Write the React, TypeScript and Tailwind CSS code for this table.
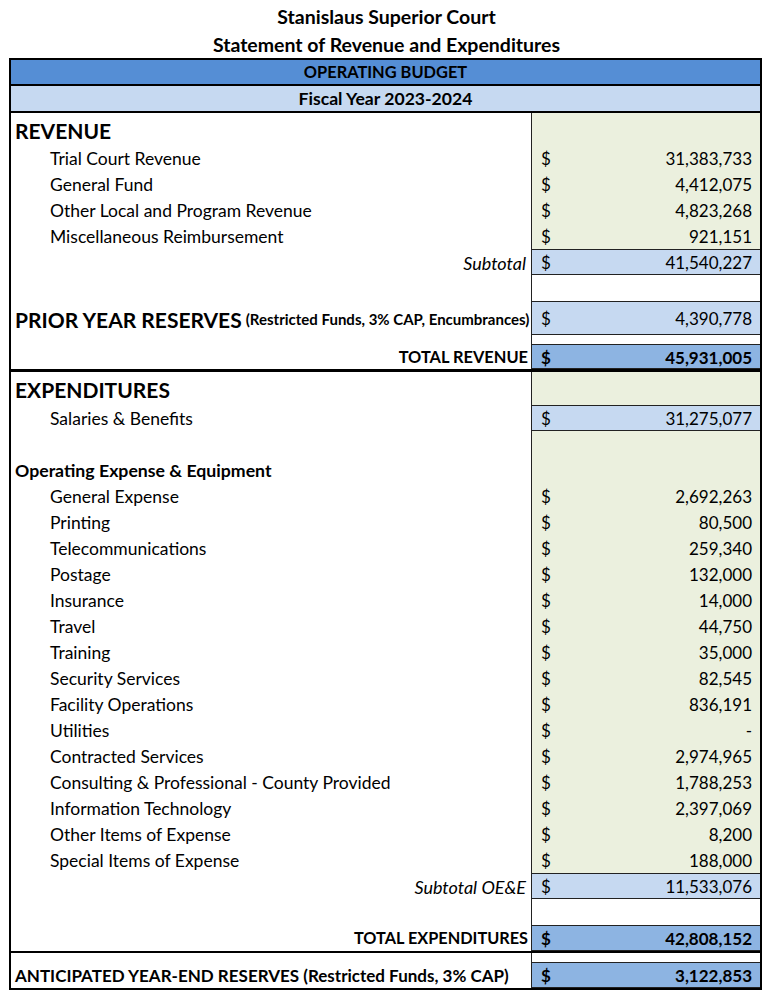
import React from "react"

type Fill = "green" | "light" | "mid" | "white"

const fills: Record<Fill, string> = {
  green: "bg-[#ebf0de]",
  light: "bg-[#c6d9f1] border-y border-[#222]",
  mid: "bg-[#8db4e2] border-y border-[#222]",
  white: "bg-white",
}

function Row({
  h,
  fill,
  value,
  bold,
  children,
  className = "",
}: {
  h: string
  fill: Fill
  value?: string
  bold?: boolean
  children?: React.ReactNode
  className?: string
}) {
  return (
    <div className={`grid grid-cols-[520px_229px] ${h}`}>
      <div className={`flex items-center ${className}`}>{children}</div>
      <div className="border-l border-[#222]">
        <div className={`flex h-full items-center justify-between pl-[9px] pr-[8px] pt-[1px] text-[17px] ${fills[fill]} ${bold ? "font-bold" : ""}`}>
          {value !== undefined && (
            <>
              <span>$</span>
              <span>{value}</span>
            </>
          )}
        </div>
      </div>
    </div>
  )
}

const revenue = [
  ["Trial Court Revenue", "31,383,733"],
  ["General Fund", "4,412,075"],
  ["Other Local and Program Revenue", "4,823,268"],
  ["Miscellaneous Reimbursement", "921,151"],
]

const oee = [
  ["General Expense", "2,692,263"],
  ["Printing", "80,500"],
  ["Telecommunications", "259,340"],
  ["Postage", "132,000"],
  ["Insurance", "14,000"],
  ["Travel", "44,750"],
  ["Training", "35,000"],
  ["Security Services", "82,545"],
  ["Facility Operations", "836,191"],
  ["Utilities", "-"],
  ["Contracted Services", "2,974,965"],
  ["Consulting & Professional - County Provided", "1,788,253"],
  ["Information Technology", "2,397,069"],
  ["Other Items of Expense", "8,200"],
  ["Special Items of Expense", "188,000"],
]

export default function App() {
  return (
    <div className="h-[1005px] w-[773px] bg-white text-[17.5px] leading-none text-black" style={{ fontFamily: "Lato, 'Open Sans', sans-serif" }}>
      <div className="pt-[6px] text-center text-[19.5px] font-bold">
        <div className="h-[28px] leading-[22px]">Stanislaus Superior Court</div>
        <div className="h-[24px] leading-[22px]">Statement of Revenue and Expenditures</div>
      </div>

      <div className="ml-[9px] w-[753px] border-2 border-black">
        <div className="flex h-[26px] items-center justify-center border-b-2 border-black bg-[#558ed5] text-[16.4px] font-bold">
          OPERATING BUDGET
        </div>
        <div className="flex h-[27px] items-center justify-center border-b-2 border-black bg-[#c6d9f1] text-[17.6px] font-bold">
          Fiscal Year 2023-2024
        </div>

        {/* revenue */}
        <Row h="h-[32px]" fill="green" className="pl-[4px] pt-[2px] text-[21px] font-bold">REVENUE</Row>
        {revenue.map(([label, v]) => (
          <Row key={label} h="h-[26px]" fill="green" value={v} className="pl-[39px] pt-[2px]">
            {label}
          </Row>
        ))}
        <Row h="h-[26px]" fill="light" value="41,540,227" className="justify-end pr-[5px] pt-[1px] text-[18px] italic">
          Subtotal
        </Row>
        <Row h="h-[26px]" fill="white" />
        <Row h="h-[34px]" fill="light" value="4,390,778" className="pl-[4px] pt-[3px] font-bold">
          <span className="text-[21px]">PRIOR YEAR RESERVES</span>
          <span className="ml-[4px] text-[15px]">(Restricted Funds, 3% CAP, Encumbrances)</span>
        </Row>
        <Row h="h-[9px]" fill="white" />
        <Row h="h-[25px]" fill="mid" bold value="45,931,005" className="justify-end pr-[3px] pt-[1px] text-[16.4px] font-bold">
          TOTAL REVENUE
        </Row>

        <div className="h-[3px] bg-black" />

        {/* expenditures */}
        <Row h="h-[33px]" fill="green" className="pl-[4px] pt-[2px] text-[21px] font-bold">EXPENDITURES</Row>
        <Row h="h-[26px]" fill="light" value="31,275,077" className="pl-[39px] pt-[2px]">
          Salaries &amp; Benefits
        </Row>
        <Row h="h-[26px]" fill="green" />
        <Row h="h-[26px]" fill="green" className="pl-[4px] pt-[2px] text-[17.7px] font-bold">
          Operating Expense &amp; Equipment
        </Row>
        {oee.map(([label, v]) => (
          <Row key={label} h="h-[26px]" fill="green" value={v} className="pl-[39px] pt-[2px]">
            {label}
          </Row>
        ))}
        <Row h="h-[26px]" fill="light" value="11,533,076" className="justify-end pr-[5px] pt-[1px] text-[18px] italic">
          Subtotal OE&amp;E
        </Row>
        <Row h="h-[26px]" fill="white" />
        <Row h="h-[26px]" fill="mid" bold value="42,808,152" className="justify-end pr-[3px] pt-[1px] text-[16.3px] font-bold">
          TOTAL EXPENDITURES
        </Row>

        <div className="h-[2px] bg-black" />

        <Row h="h-[9px]" fill="white" />
        <Row h="h-[26px]" fill="mid" bold value="3,122,853" className="pl-[4px] pt-[1px] text-[17px] font-bold">
          ANTICIPATED YEAR-END RESERVES (Restricted Funds, 3% CAP)
        </Row>
      </div>
    </div>
  )
}
